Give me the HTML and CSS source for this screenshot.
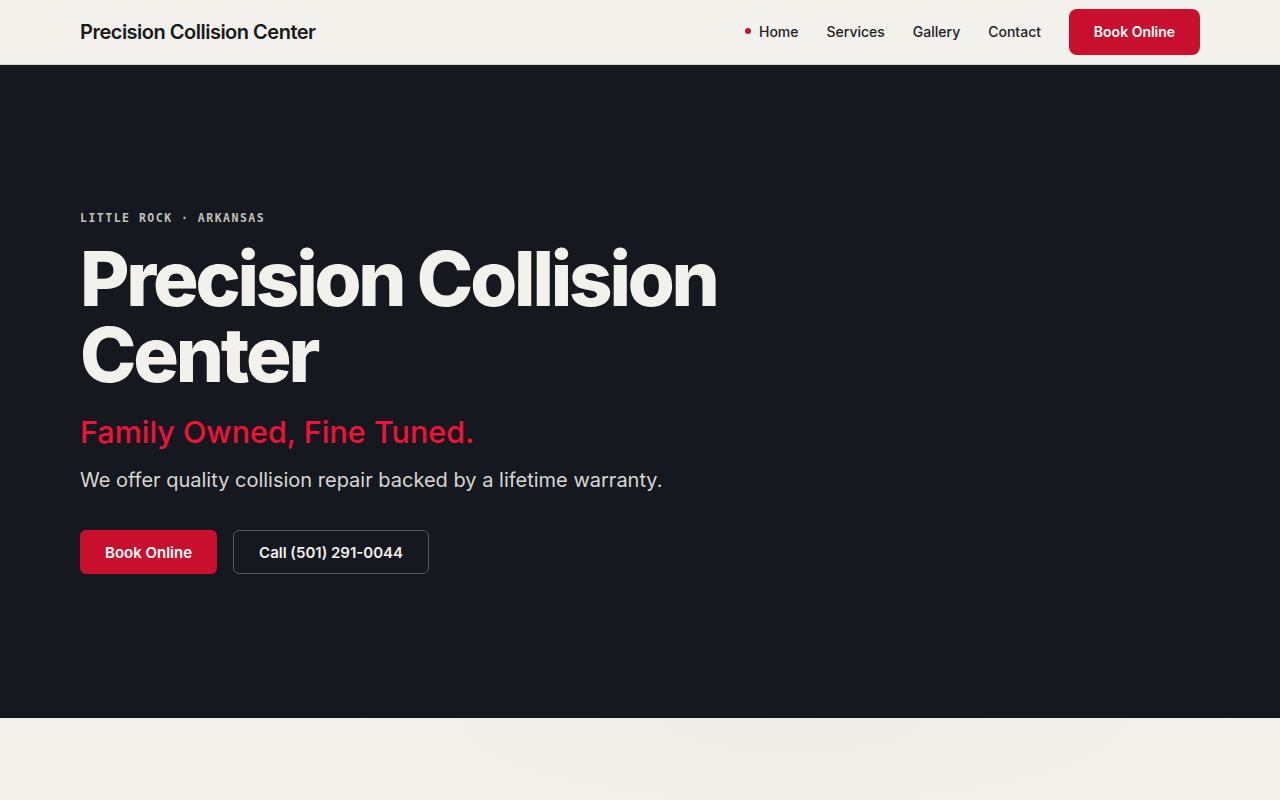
FILE: index.html
```html
<!DOCTYPE html>
<html lang="en">
<head>
<meta charset="utf-8">
<title>Precision Collision Center</title>
<link rel="stylesheet" href="styles.css">
</head>
<body>
<header class="site-header">
  <div class="container header-inner">
    <a class="brand" href="#">Precision Collision Center</a>
    <nav class="nav">
      <a class="nav-link active" href="#"><span class="dot"></span>Home</a>
      <a class="nav-link" href="#">Services</a>
      <a class="nav-link" href="#">Gallery</a>
      <a class="nav-link" href="#">Contact</a>
      <a class="btn btn-primary btn-nav" href="#">Book Online</a>
    </nav>
  </div>
</header>
<section class="hero">
  <div class="container hero-inner">
    <p class="eyebrow">LITTLE ROCK · ARKANSAS</p>
    <h1 class="hero-title">Precision Collision<br>Center</h1>
    <p class="tagline">Family Owned, Fine Tuned.</p>
    <p class="lead">We offer quality collision repair backed by a lifetime warranty.</p>
    <div class="actions">
      <a class="btn btn-primary btn-hero" href="#">Book Online</a>
      <a class="btn btn-outline btn-hero" href="#">Call (501) 291-0044</a>
    </div>
  </div>
</section>
<section class="below"></section>
</body>
</html>
```

FILE: styles.css
```css
* { box-sizing: border-box; }
html, body { margin: 0; padding: 0; }
body {
  font-family: Inter, "Noto Sans", sans-serif;
  background: #f2f1ec;
  color: #1a1b1e;
}
a { text-decoration: none; color: inherit; }
.container { width: 1120px; margin: 0 auto; }

.site-header {
  height: 65px;
  background: #f2f1ec;
  border-bottom: 1px solid #d9d6cd;
}
.header-inner {
  height: 64px;
  display: flex;
  align-items: center;
  justify-content: space-between;
}
.brand {
  font-size: 20px;
  font-weight: 600;
  letter-spacing: -0.025em;
  color: #18191c;
  margin-top: -1px;
}
.nav { display: flex; align-items: center; }
.nav-link {
  font-size: 14px;
  font-weight: 500;
  color: #1f2024;
  margin-right: 28px;
  display: flex;
  align-items: center;
  margin-top: -2px;
}
.dot {
  width: 6px; height: 6px; border-radius: 50%;
  background: #c8102e;
  margin-right: 8px;
}
.btn {
  display: inline-flex;
  align-items: center;
  justify-content: center;
  font-weight: 600;
  font-size: 14px;
}
.btn-primary { background: #c8102e; color: #fff; }
.btn-nav {
  width: 131px; height: 46px; border-radius: 8px;
  padding-bottom: 1px;
}

.hero {
  background: #15181e;
  height: 653px;
  display: flex;
  align-items: center;
}
.hero-inner { padding-top: 2px; }
.eyebrow {
  margin: 0 0 15px;
  font-family: "DejaVu Sans Mono", "Liberation Mono", monospace;
  font-size: 11.5px;
  font-weight: 600;
  letter-spacing: 0.13em;
  color: #c2c1bc;
}
.hero-title {
  margin: 0;
  font-size: 76px;
  line-height: 76px;
  font-weight: 800;
  letter-spacing: -0.042em;
  color: #f2f1ec;
}
.tagline {
  margin: 21px 0 0;
  font-size: 30.5px;
  font-weight: 500;
  color: #f01237;
}
.lead {
  margin: 18px 0 0;
  font-size: 20px;
  font-weight: 400;
  color: #d8d7d2;
}
.actions { display: flex; gap: 16px; margin-top: 38px; }
.btn-hero { height: 44px; border-radius: 6px; font-size: 15px; padding: 0 25px; }
.btn-outline {
  border: 1px solid #55585e;
  color: #f2f1ec;
}

.below {
  height: 82px;
  background:
    radial-gradient(ellipse 700px 180px at 62% 0%, rgba(0,0,0,0.018), transparent 70%),
    #f2f1ec;
}
```
